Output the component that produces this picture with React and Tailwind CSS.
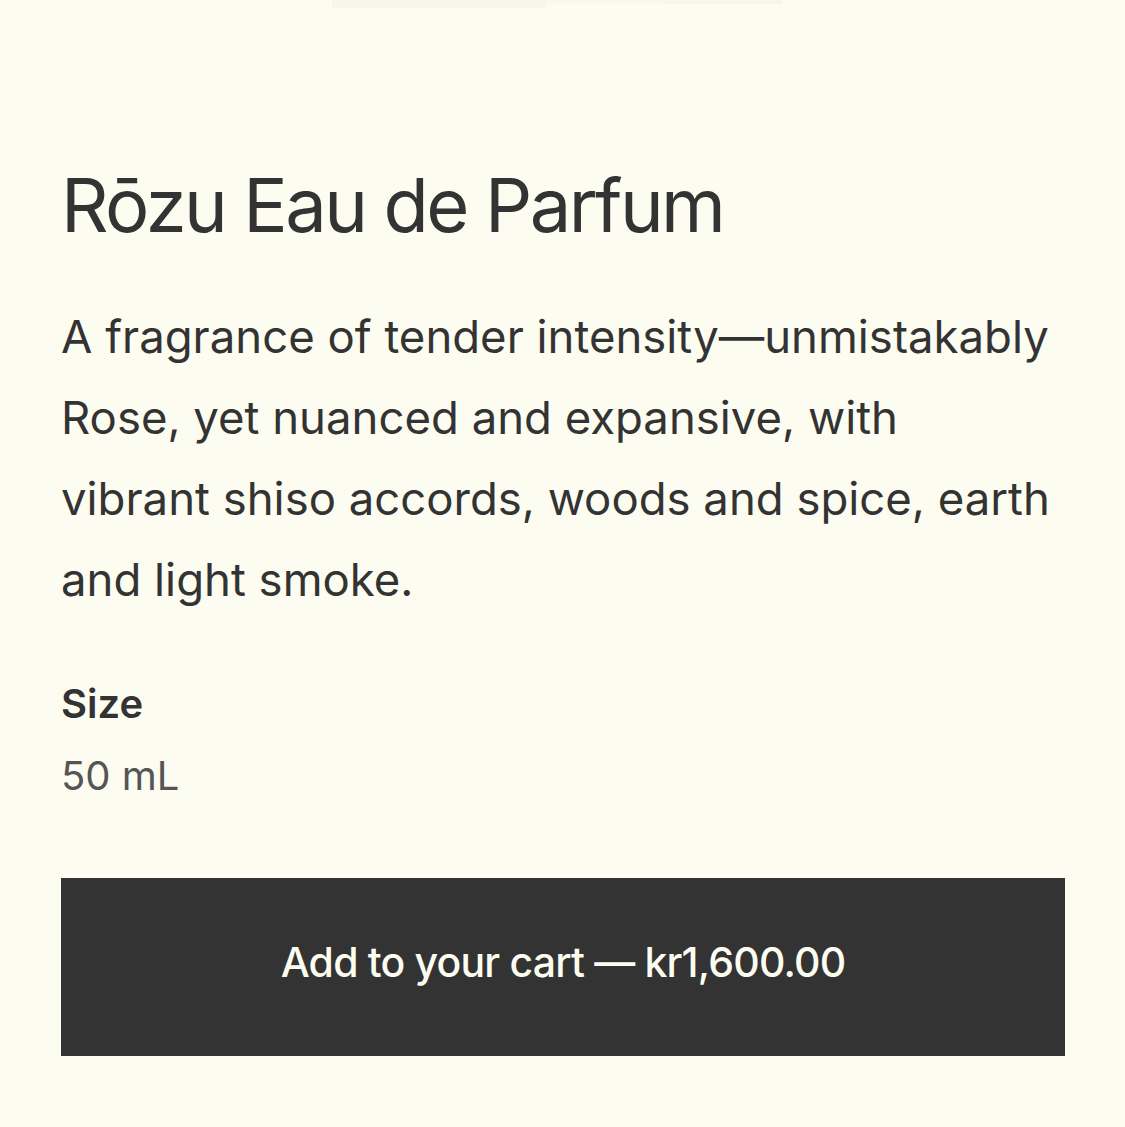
export default function App() {
  const lines = [
    "A fragrance of tender intensity—unmistakably",
    "Rose, yet nuanced and expansive, with",
    "vibrant shiso accords, woods and spice, earth",
    "and light smoke.",
  ];

  return (
    <div className="min-h-[1127px] w-full bg-[#fcfcf0] font-['Inter',_sans-serif] text-[#333333]">
      {/* faint remnants of the image strip above */}
      <div className="flex h-[8px] gap-0 pl-[332px]">
        <div className="h-[8px] w-[213px] bg-[#f6f6ea]" />
        <div className="h-[4px] w-[125px] bg-[#f8f8ec]" />
        <div className="h-[4px] w-[112px] bg-[#f6f6ea]" />
      </div>

      <div className="px-[61px] pt-[157px]">
        <h1 className="text-[74px] font-normal leading-[1.1] tracking-[-0.035em]">
          Rōzu Eau de Parfum
        </h1>

        <p className="mt-[50px] text-[45.5px] leading-[81px]">
          {lines.map((l) => (
            <span key={l} className="block whitespace-nowrap">
              {l}
            </span>
          ))}
        </p>

        <div className="mt-[60px] text-[40px] font-semibold leading-[1.2]">Size</div>
        <div className="mt-[24px] text-[40px] leading-[1.2] text-[#555555]">50 mL</div>

        <button className="mt-[78px] flex h-[178px] w-[1004px] items-center justify-center bg-[#333333] pb-[10px] text-[41px] font-medium tracking-[-0.02em] text-[#fcfcf0]">
          Add to your cart — kr1,600.00
        </button>
      </div>
    </div>
  );
}
